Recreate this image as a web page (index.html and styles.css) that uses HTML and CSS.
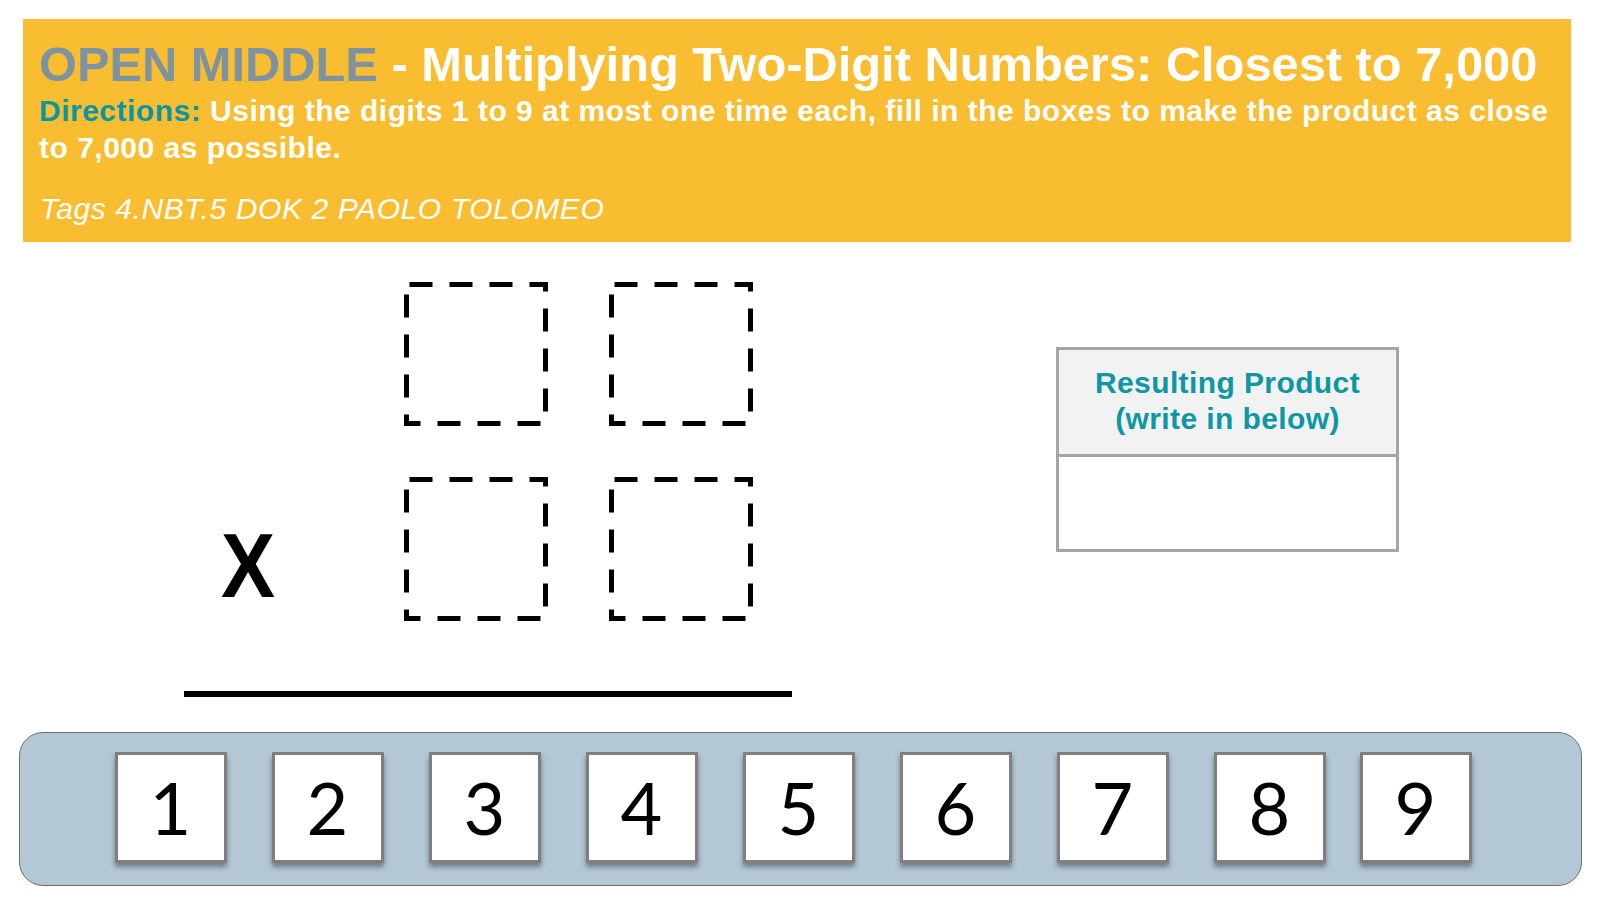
FILE: index.html
```html
<!DOCTYPE html>
<html lang="en">
<head>
<meta charset="utf-8">
<title>Open Middle - Multiplying Two-Digit Numbers</title>
<link rel="stylesheet" href="styles.css">
</head>
<body>
<header class="banner">
  <h1 class="title"><span class="brand">OPEN MIDDLE</span> - Multiplying Two-Digit Numbers: Closest to 7,000</h1>
  <p class="directions"><span class="label">Directions:</span> Using the digits 1 to 9 at most one time each, fill in the boxes to make the product as close to 7,000 as possible.</p>
  <p class="tags">Tags 4.NBT.5 DOK 2 PAOLO TOLOMEO</p>
</header>

<main class="workspace">
  <section class="problem">
    <div class="grid">
      <div class="cell-empty"></div>
      <svg class="slot" viewBox="0 0 144 144" width="144" height="144"><rect x="2.5" y="2.5" width="139" height="139" fill="none" stroke="#000" stroke-width="5" stroke-dasharray="23 17" stroke-dashoffset="-3"/></svg>
      <svg class="slot" viewBox="0 0 144 144" width="144" height="144"><rect x="2.5" y="2.5" width="139" height="139" fill="none" stroke="#000" stroke-width="5" stroke-dasharray="23 17" stroke-dashoffset="-3"/></svg>
      <div class="times">X</div>
      <svg class="slot" viewBox="0 0 144 144" width="144" height="144"><rect x="2.5" y="2.5" width="139" height="139" fill="none" stroke="#000" stroke-width="5" stroke-dasharray="23 17" stroke-dashoffset="-3"/></svg>
      <svg class="slot" viewBox="0 0 144 144" width="144" height="144"><rect x="2.5" y="2.5" width="139" height="139" fill="none" stroke="#000" stroke-width="5" stroke-dasharray="23 17" stroke-dashoffset="-3"/></svg>
    </div>
    <div class="rule"></div>
  </section>

  <section class="result">
    <div class="result-head">Resulting Product<br>(write in below)</div>
    <div class="result-body"></div>
  </section>
</main>

<div class="tray">
  <div class="tile">1</div>
  <div class="tile">2</div>
  <div class="tile">3</div>
  <div class="tile">4</div>
  <div class="tile">5</div>
  <div class="tile">6</div>
  <div class="tile">7</div>
  <div class="tile">8</div>
  <div class="tile">9</div>
</div>
</body>
</html>
```

FILE: styles.css
```css
* { box-sizing: border-box; }

html, body {
  margin: 0;
  padding: 0;
  background: #ffffff;
  width: 1600px;
  height: 900px;
  overflow: hidden;
  font-family: "Liberation Sans", Arial, sans-serif;
}

/* ---------- banner ---------- */
.banner {
  margin: 19px 29px 0 23px;
  height: 223px;
  background: #F8BD30;
  padding: 19px 10px 0 16px;
  color: #ffffff;
}

.title {
  margin: 0;
  font-size: 48.8px;
  line-height: 1.1;
  font-weight: 700;
  white-space: nowrap;
}

.brand { color: #7E93A0; }

.directions {
  margin: 1.4px 0 0 0;
  font-size: 30px;
  line-height: 36.6px;
  font-weight: 700;
  letter-spacing: 0.5px;
}

.label { color: #0896A2; }

.tags {
  margin: 25.6px 0 0 1px;
  font-size: 30px;
  line-height: 34px;
  font-style: italic;
  letter-spacing: 0.6px;
}

/* ---------- workspace ---------- */
.workspace {
  display: flex;
  align-items: flex-start;
  padding-top: 40px;
}

.problem {
  margin-left: 184px;
  width: 608px;
}

.grid {
  display: grid;
  grid-template-columns: 159px 144px 144px;
  grid-template-rows: 144px 144px;
  column-gap: 61px;
  row-gap: 51px;
}

.slot { display: block; }

.times {
  align-self: start;
  margin-top: 44px;
  padding-left: 37px;
  font-size: 90px;
  line-height: 1;
  font-weight: 700;
  color: #000;
  transform: scaleX(0.9);
  transform-origin: 37px 0;
}

.rule {
  margin-top: 70px;
  height: 6px;
  background: #000;
}

.result {
  margin-left: 264px;
  margin-top: 65px;
  width: 343px;
  border: 3px solid #A5A5A5;
}

.result-head {
  height: 107px;
  padding-top: 15px;
  background: #F2F2F2;
  border-bottom: 3px solid #A5A5A5;
  color: #0C97A3;
  font-weight: 700;
  font-size: 30px;
  line-height: 36px;
  text-align: center;
  letter-spacing: 0.4px;
}

.result-body {
  height: 92px;
  background: #ffffff;
}

/* ---------- tile tray ---------- */
.tray {
  margin: 35px 18px 0 19px;
  height: 154px;
  background: #B3C7D5;
  border: 1.5px solid #6E6E6E;
  border-radius: 24px;
  display: flex;
  gap: 45px;
  padding: 18.5px 0 0 94.5px;
}

.tile {
  width: 112px;
  height: 111px;
  background: #ffffff;
  border: 3px solid #7F7F7F;
  box-shadow: 0 4px 5px rgba(0, 0, 0, 0.38);
  display: flex;
  align-items: center;
  justify-content: center;
  font-family: Lato, "Open Sans", sans-serif;
  font-size: 72px;
  color: #000;
}

.tile:last-child { margin-left: -11px; }
```
